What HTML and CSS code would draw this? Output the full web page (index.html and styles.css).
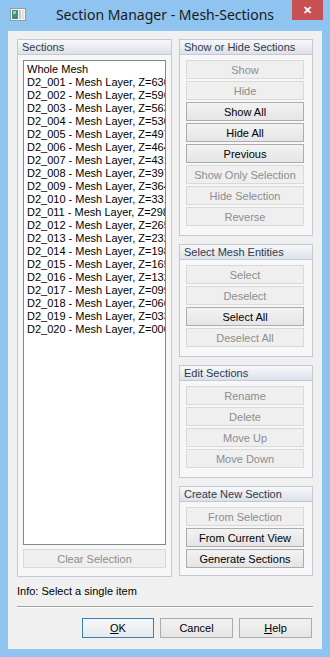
FILE: index.html
```html
<!DOCTYPE html>
<html lang="en">
<head>
  <meta charset="UTF-8">
  <title>Section Manager - Mesh-Sections</title>
  <link rel="stylesheet" href="styles.css">
</head>
<body>

<div class="titlebar">
  <div class="app-icon">
    <svg width="16" height="13" viewBox="0 0 16 13">
      <rect x="0.5" y="0.5" width="15" height="12" fill="#f4f4f4" stroke="#9a9a9a"/>
      <rect x="2" y="2" width="6" height="9" fill="#3f8f7f"/>
      <rect x="3" y="3" width="3" height="3" fill="#8fd0c0"/>
      <rect x="9" y="2" width="2" height="9" fill="#c9c9c9"/>
      <rect x="12" y="2" width="2" height="9" fill="#e0e0e0"/>
    </svg>
  </div>
  <div class="title">Section Manager - Mesh-Sections</div>
  <div class="close-wrap"><div class="close">&#x2715;</div></div>
</div>

<div class="client">
  <div class="panels">

    <!-- Sections list -->
    <div class="group sections">
      <div class="group-head">Sections</div>
      <div class="group-body">
        <ul class="listbox" id="section-list">
          <li>Whole Mesh</li>
        </ul>
        <button class="btn" disabled>Clear Selection</button>
      </div>
    </div>

    <div class="side">
      <div class="group">
        <div class="group-head">Show or Hide Sections</div>
        <div class="group-body">
          <button class="btn" disabled>Show</button>
          <button class="btn" disabled>Hide</button>
          <button class="btn">Show All</button>
          <button class="btn">Hide All</button>
          <button class="btn">Previous</button>
          <button class="btn" disabled>Show Only Selection</button>
          <button class="btn" disabled>Hide Selection</button>
          <button class="btn" disabled>Reverse</button>
        </div>
      </div>

      <div class="group">
        <div class="group-head">Select Mesh Entities</div>
        <div class="group-body">
          <button class="btn" disabled>Select</button>
          <button class="btn" disabled>Deselect</button>
          <button class="btn">Select All</button>
          <button class="btn" disabled>Deselect All</button>
        </div>
      </div>

      <div class="group">
        <div class="group-head">Edit Sections</div>
        <div class="group-body">
          <button class="btn" disabled>Rename</button>
          <button class="btn" disabled>Delete</button>
          <button class="btn" disabled>Move Up</button>
          <button class="btn" disabled>Move Down</button>
        </div>
      </div>

      <div class="group last">
        <div class="group-head">Create New Section</div>
        <div class="group-body">
          <button class="btn" disabled>From Selection</button>
          <button class="btn">From Current View</button>
          <button class="btn">Generate Sections</button>
        </div>
      </div>
    </div>

  </div>

  <div class="info">Info: Select a single item</div>
  <div class="separator"></div>

  <div class="footer">
    <button class="dlg default"><u>O</u>K</button>
    <button class="dlg">Cancel</button>
    <button class="dlg"><u>H</u>elp</button>
  </div>
</div>

<script>
// fill the section list
const zs = ['630','596','563','530','497','464','431','397','364','331',
            '298','265','232','198','165','132','099','066','033','000'];
let ul = document.getElementById('section-list');
zs.forEach((z, i) => {
  let li = document.createElement('li');
  let n = String(i + 1).padStart(3, '0');
  li.textContent = `D2_${n} - Mesh Layer, Z=${z}`;
  ul.appendChild(li);
});
</script>

</body>
</html>
```

FILE: styles.css
```css
body { margin:0; width:330px; height:657px; background:#8fc3f0;
  font-family:"Liberation Sans", Arial, sans-serif; font-size:11px; color:#000;
  overflow:hidden; }

/* Title bar */
.titlebar { height:31px; display:grid; grid-template-columns:1fr auto 1fr; align-items:start; }
.app-icon { padding:8px 0 0 10px; }
.app-icon svg { display:block; }
.title { font-family:"Noto Sans", "Open Sans", sans-serif; font-size:14px; color:#1a1a1a;
  line-height:20px; padding-top:5px; }
.close-wrap { display:flex; justify-content:flex-end; padding-right:7px; }
.close { width:31px; height:20px; background:#c75050; color:#fff; font-size:11px;
  font-weight:bold; text-align:center; line-height:20px; }

/* Client area */
.client { margin:0 8px; height:618px; background:#f0f0f0; box-sizing:border-box;
  padding:8px 9px 0 9px; }
.panels { display:flex; gap:7px; }

.group { border:1px solid #c3c8d6; background:#f7f7f7; box-sizing:border-box; }
.group-head { height:14px; line-height:14px; padding-left:4px; color:#2e3a4c;
  border-bottom:1px solid #c3c8d6;
  background:linear-gradient(#f7f8fa, #dde1ea); }
.group-body { padding:5px 8px 8px 6px; display:flex; flex-direction:column; gap:2px; }

.sections { width:155px; height:538px; }
.sections .group-body { padding:5px 5px 0 5px; gap:4px; }

.side { width:134px; display:flex; flex-direction:column; gap:8px; }
.side .group-body { padding-bottom:9px; }
.side .group.last .group-body { padding-bottom:7px; }

/* List box */
.listbox { list-style:none; margin:0; padding:2px 3px; height:479px;
  background:#fff; border:1px solid #828790; overflow:hidden; }
.listbox li { height:13px; line-height:13px; white-space:nowrap; }

/* Buttons */
.btn { height:19px; width:100%; padding:0; font-family:inherit; font-size:11px;
  color:#000; border:1px solid #acacac;
  background:linear-gradient(#f2f2f2, #e5e5e5); }
.btn:disabled { color:#8d8d8d; border-color:#d9d9d9; background:#efefef; }
.side .btn { width:118px; }

.info { margin-top:8px; line-height:13px; padding-left:0; }
.separator { margin-top:8px; border-top:1px solid #a0a0a0; border-bottom:1px solid #fff; }

.footer { display:flex; justify-content:flex-end; gap:6px; margin-top:10px; padding-right:1px; }
.dlg { width:72px; height:20px; padding:0; font-family:inherit; font-size:11px; color:#000;
  border:1px solid #acacac; background:linear-gradient(#f2f2f2, #e5e5e5); }
.dlg + .dlg { width:73px; }
.dlg.default { border-color:#3c7fb1; background:linear-gradient(#f4f6f8, #e7eaee); }
```
